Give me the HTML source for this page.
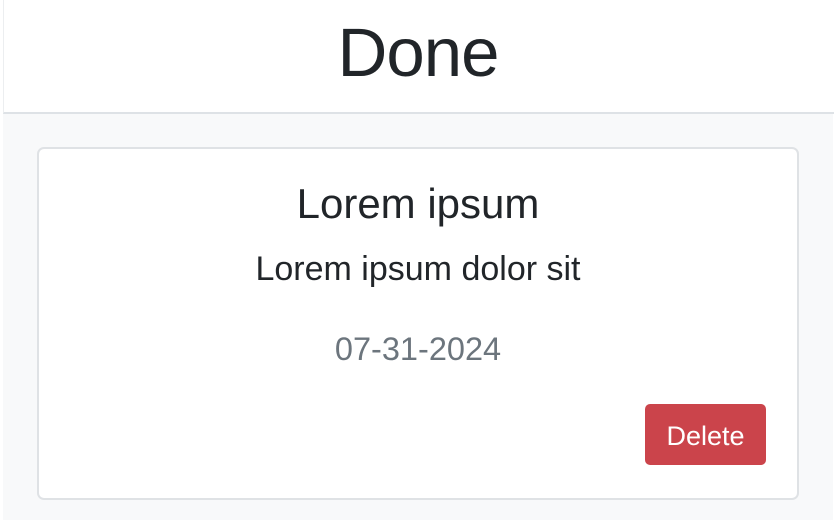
<!DOCTYPE html>
<html><head><style>
html,body{margin:0;padding:0;}
body{width:836px;height:520px;background:#fff;position:relative;overflow:hidden;font-family:"Liberation Sans",sans-serif;color:#212529;}
.hdr{position:absolute;left:3px;top:0;width:830px;height:112px;background:#fff;border-bottom:2px solid #dee2e6;border-left:1px solid #eceef0;}
.bg{position:absolute;left:3px;top:114px;width:830px;height:406px;background:#f8f9fa;}
.t{position:absolute;left:0;width:836px;text-align:center;white-space:nowrap;}
.card{position:absolute;left:37px;top:147px;width:758px;height:349px;background:#fff;border:2px solid #dfe2e5;border-radius:7px;}
.btn{position:absolute;left:645px;top:404px;width:121px;height:61px;background:#cb444b;border-radius:5px;color:#fff;font-size:27px;line-height:64px;text-align:center;}
</style></head><body>
<div class="hdr"></div>
<div class="bg"></div>
<div class="t" style="top:11px;font-size:69px;line-height:84px;letter-spacing:-1px;">Done</div>
<div class="card"></div>
<div class="t" style="top:180px;font-size:42px;line-height:48px;">Lorem ipsum</div>
<div class="t" style="top:249px;font-size:34px;line-height:40px;">Lorem ipsum dolor sit</div>
<div class="t" style="top:330px;font-size:32.5px;line-height:38px;color:#6c757d;">07-31-2024</div>
<div class="btn">Delete</div>
</body></html>
